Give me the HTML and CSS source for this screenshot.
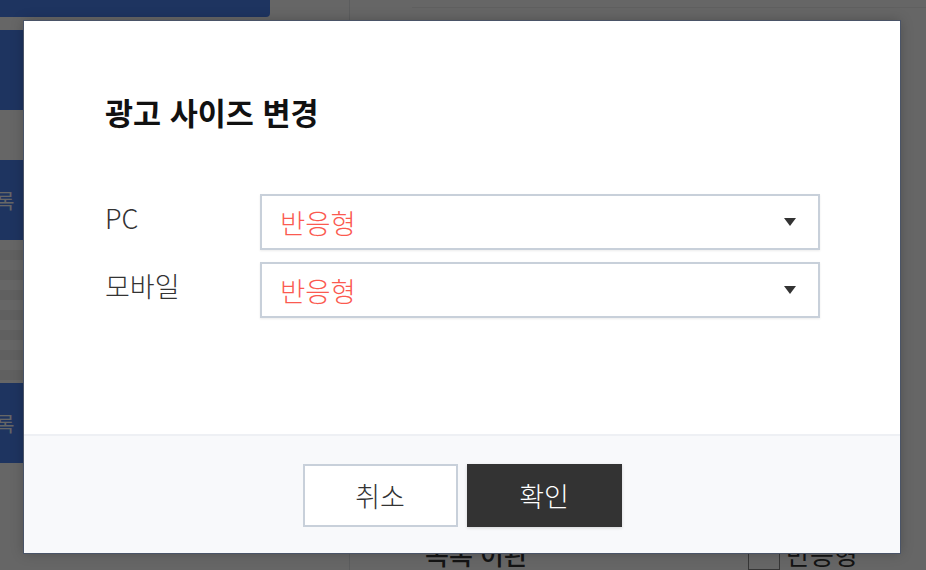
FILE: index.html
```html
<!DOCTYPE html>
<html lang="ko">
<head>
<meta charset="utf-8">
<title>광고 사이즈 변경</title>
<link rel="stylesheet" href="styles.css">
</head>
<body>
<div class="page">
  <aside class="side">
    <div class="topbar"></div>
    <div class="side-block b1"></div>
    <div class="side-block b2"><span>록</span></div>
    <div class="stripes"></div>
    <div class="side-block b3"><span>록</span></div>
  </aside>
  <main class="content">
    <div class="content-top"></div>
    <div class="content-bottom">
      <span class="bg-title">목록 이관</span>
      <span class="bg-check"></span>
      <span class="bg-label">반응형</span>
    </div>
  </main>
</div>

<div class="overlay">
  <div class="modal">
    <div class="modal-body">
      <h2 class="modal-title">광고 사이즈 변경</h2>
      <div class="form-row">
        <label class="form-label">PC</label>
        <div class="select">
          <span class="select-value">반응형</span>
          <span class="caret"></span>
        </div>
      </div>
      <div class="form-row">
        <label class="form-label">모바일</label>
        <div class="select">
          <span class="select-value">반응형</span>
          <span class="caret"></span>
        </div>
      </div>
    </div>
    <div class="modal-footer">
      <button class="btn btn-cancel">취소</button>
      <button class="btn btn-ok">확인</button>
    </div>
  </div>
</div>
</body>
</html>
```
FILE: styles.css
```css
* { box-sizing: border-box; }
html, body { margin: 0; padding: 0; }
body {
  width: 926px;
  height: 570px;
  overflow: hidden;
  font-family: "Noto Sans CJK KR", "Noto Sans", sans-serif;
  background: #ffffff;
  position: relative;
}

/* background page */
.page {
  display: flex;
  height: 570px;
}
.side {
  width: 350px;
  border-right: 1px solid #e6e8eb;
  display: flex;
  flex-direction: column;
}
.topbar {
  width: 270px;
  height: 17px;
  background: #4b82f0;
  border-bottom-right-radius: 4px;
}
.side-block {
  width: 100%;
  height: 80px;
  background: #4b82f0;
  color: #ffffff;
  font-size: 20px;
  display: flex;
  align-items: center;
}
.side-block span { margin-left: -4px; }
.b1 { margin-top: 13px; }
.b2 { margin-top: 50px; }
.b3 { margin-top: 0; }
.stripes {
  height: 143px;
  background: repeating-linear-gradient(180deg, #ffffff 0 10px, #f0f0f0 10px 20px);
}
.content {
  flex: 1;
  display: flex;
  flex-direction: column;
  justify-content: space-between;
}
.content-top {
  margin-top: 7px;
  margin-left: 62px;
  border-top: 1px solid #f0f0f0;
}
.content-bottom {
  display: flex;
  align-items: flex-start;
  height: 32px;
  font-size: 26px;
  line-height: 32px;
  color: #333;
}
.bg-title { margin-left: 75px; font-weight: 500; }
.bg-check {
  width: 32px; height: 30px;
  border: 1px solid #888;
  margin-left: 220px;
  margin-top: 2px;
}
.bg-label { margin-left: 6px; }

/* overlay & modal */
.overlay {
  position: absolute;
  inset: 0;
  background: rgba(0, 0, 0, 0.6);
  display: flex;
  align-items: flex-start;
  padding: 21px 26px 0 24px;
}
.modal {
  width: 876px;
  height: 532px;
  background: #ffffff;
  box-shadow: 0 0 0 1px #4a5467, 0 0 12px rgba(0,0,0,0.25);
  display: flex;
  flex-direction: column;
}
.modal-body {
  flex: 1;
  padding: 71px 80px 0 81px;
  border-bottom: 2px solid #eef0f4;
}
.modal-title {
  margin: 0 0 62px;
  font-size: 30.5px;
  line-height: 40px;
  font-weight: 700;
  color: #111;
}
.form-row {
  display: flex;
  align-items: center;
  margin-bottom: 12px;
}
.form-label {
  width: 155px;
  font-size: 27px;
  line-height: 1;
  font-weight: 300;
  color: #333;
  margin-bottom: 10px;
}
.select {
  flex: 1;
  height: 56px;
  border: 2px solid #c8d0da;
  box-shadow: 0 1px 2px rgba(0,0,0,0.08);
  display: flex;
  align-items: center;
  justify-content: space-between;
  padding: 0 22px 0 18px;
}
.select-value {
  font-size: 27.5px;
  font-weight: 300;
  color: #fb5a50;
  line-height: 1;
  margin-top: 2px;
}
.caret {
  width: 0; height: 0;
  border-left: 6px solid transparent;
  border-right: 6px solid transparent;
  border-top: 8px solid #333;
}
.modal-footer {
  height: 117px;
  background: #f8f9fb;
  display: flex;
  justify-content: center;
  align-items: flex-start;
  gap: 9px;
  padding-top: 28px;
}
.btn {
  width: 155px;
  height: 63px;
  font-family: inherit;
  font-size: 27px;
  font-weight: 300;
  border: 0;
  padding: 0;
  cursor: pointer;
}
.btn-cancel {
  background: #ffffff;
  color: #333;
  border: 2px solid #c8d0da;
}
.btn-ok {
  background: #333333;
  color: #ffffff;
  box-shadow: 0 1px 3px rgba(0,0,0,0.15);
}
```
